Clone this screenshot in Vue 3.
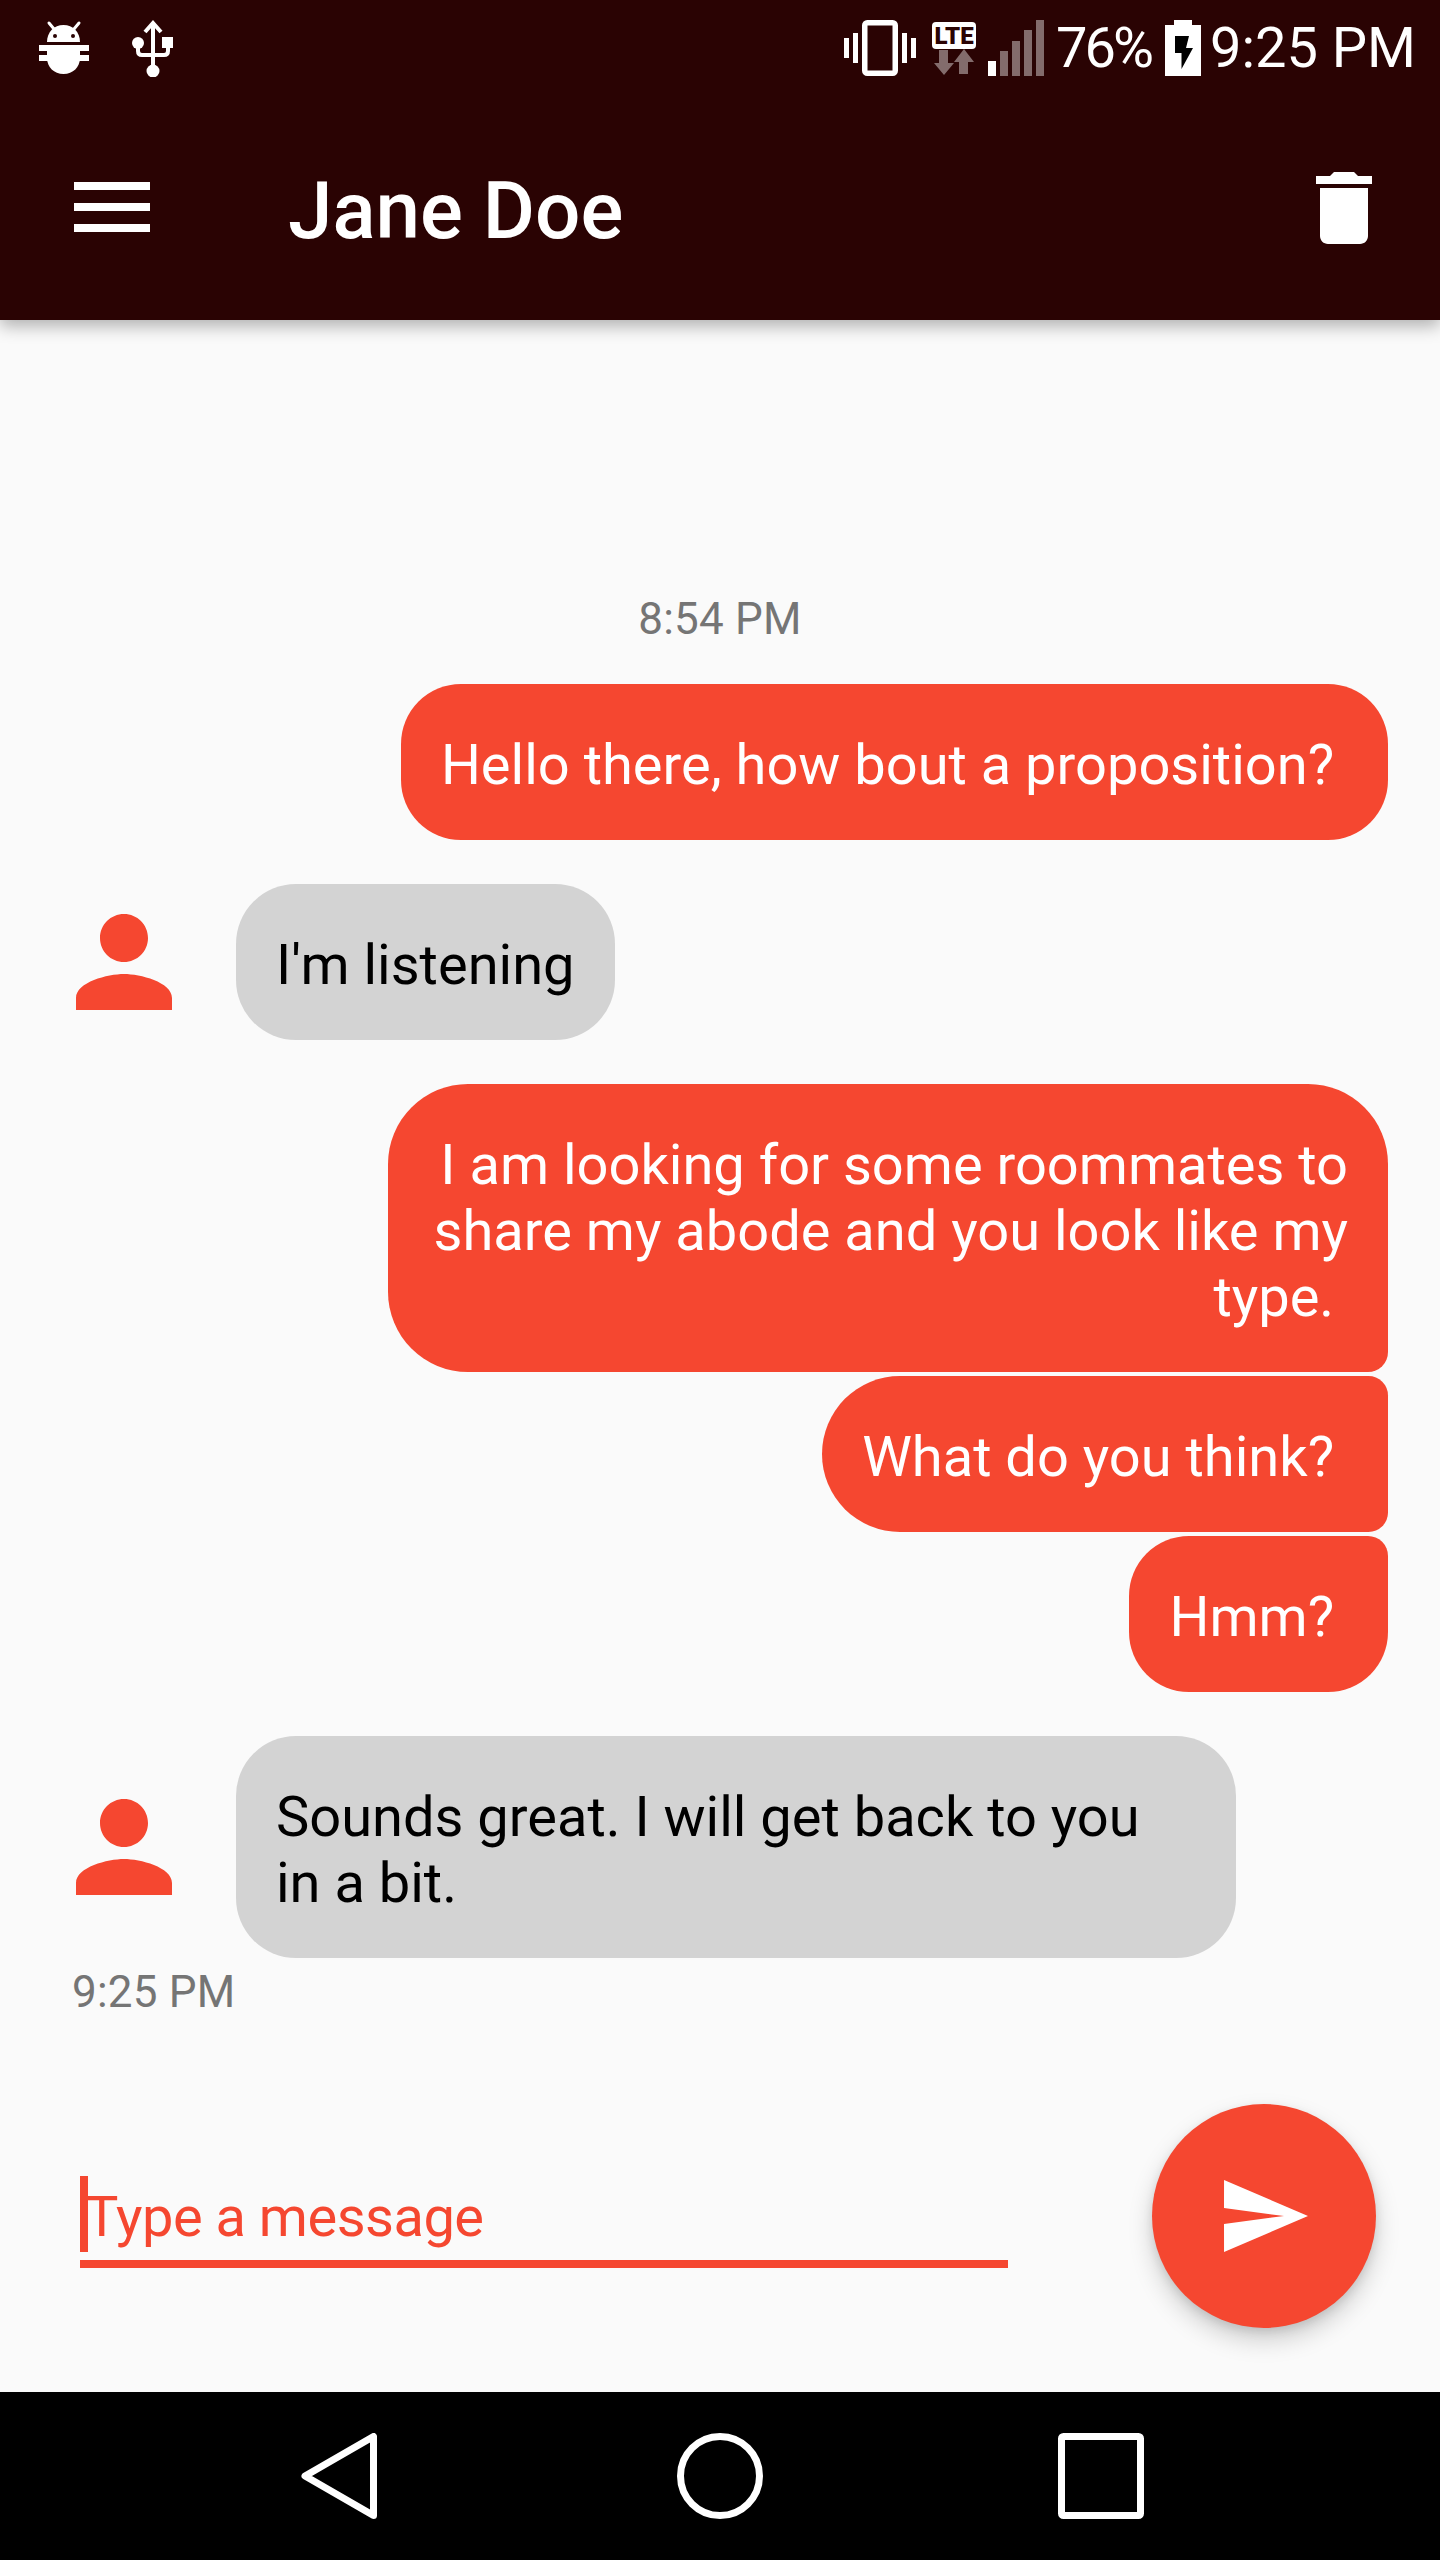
<template>
  <div class="phone">
    <header class="appbar">
      <div class="status">
        <div class="status-left">
          <svg class="ic-adb" width="50" height="56" viewBox="0 0 50 56">
            <path d="M10 3l5 6M40 3l-5 6" stroke="#fff" stroke-width="3" stroke-linecap="round" />
            <path d="M8 22c0-10 7-17 16.500-17S41 12 41 22z" fill="#fff" />
            <circle cx="16" cy="16" r="2" fill="#2a0303" />
            <circle cx="34" cy="16" r="2" fill="#2a0303" />
            <path d="M8 25h33v13c0 9-7 16-16.500 16S8 47 8 38z" fill="#fff" />
            <rect x="0" y="25" width="50" height="6" fill="#fff" />
            <rect x="0" y="35" width="50" height="6" fill="#fff" />
          </svg>
          <svg class="ic-usb" width="41" height="58" viewBox="0 0 41 58">
            <path d="M21 4v46M13 13l8-9 8 9" stroke="#fff" stroke-width="4" fill="none" />
            <path d="M6 26v6q0 4 4 4h22q4 0 4-4v-6" stroke="#fff" stroke-width="4" fill="none" />
            <circle cx="6" cy="24" r="6" fill="#fff" />
            <rect x="30" y="18" width="11" height="11" fill="#fff" />
            <circle cx="21" cy="52" r="6.500" fill="#fff" />
          </svg>
        </div>
        <div class="status-right">
          <svg class="ic-vibrate" width="72" height="56" viewBox="0 0 72 56">
            <rect x="20.750" y="2.750" width="30.500" height="50.500" rx="2.500" fill="none" stroke="#fff" stroke-width="5.500" />
            <path d="M9 13h5v30H9zM58 13h5v30h-5zM0 18h5v20H0zM67 18h5v20h-5z" fill="#fff" />
          </svg>
          <svg class="ic-lte" width="44" height="56" viewBox="0 0 44 56">
            <rect x="0" y="2" width="44" height="27" rx="4" fill="#fff" />
            <text x="22" y="24" text-anchor="middle" class="lte-label">LTE</text>
            <path class="dim" d="M7 30h9v13h6L12 55 2 43h5zM22 42l10-13 10 13h-6v12h-9V42z" />
          </svg>
          <svg class="ic-signal" width="56" height="56" viewBox="0 0 56 56">
            <rect x="0" y="41" width="8" height="15" fill="#fff" />
            <rect class="dim" x="12" y="31" width="8" height="25" />
            <rect class="dim" x="24" y="21" width="8" height="35" />
            <rect class="dim" x="36" y="10" width="8" height="46" />
            <rect class="dim" x="48" y="0" width="8" height="56" />
          </svg>
          <span class="battery-text">76%</span>
          <svg class="ic-battery" width="36" height="56" viewBox="0 0 36 56">
            <path d="M9 0h18v5h9v51H0V5h9z" fill="#fff" />
            <path d="M10 16h14l-3 12h7L16.500 49V33H10z" fill="#000" />
          </svg>
          <span class="clock">9:25 PM</span>
        </div>
      </div>
      <div class="toolbar">
        <svg class="ic-menu" width="96" height="96" viewBox="0 0 96 96">
          <path d="M10 22h76v8H10zM10 43h76v8H10zM10 64h76v8H10z" fill="#fff" />
        </svg>
        <h1 class="title">Jane Doe</h1>
        <svg class="ic-delete" width="96" height="96" viewBox="0 0 24 24">
          <path d="M6 19c0 1.100.9 2 2 2h8c1.100 0 2-.9 2-2V7H6v12zM19 4h-3.500l-1-1h-5l-1 1H5v2h14V4z" fill="#fff" />
        </svg>
      </div>
    </header>

    <main class="chat">
      <div class="time center">8:54 PM</div>
      <div
        v-for="msg in messages"
        :key="msg.id"
        class="row"
        :class="[msg.mine ? 'row-mine' : 'row-theirs', msg.pos]"
      >
        <svg v-if="!msg.mine" class="avatar" width="144" height="144" viewBox="0 0 24 24">
          <path d="M12 12c2.210 0 4-1.790 4-4s-1.790-4-4-4-4 1.790-4 4 1.790 4 4 4zm0 2c-2.670 0-8 1.340-8 4v2h16v-2c0-2.660-5.330-4-8-4z" />
        </svg>
        <div class="bubble">{{ msg.text }}</div>
      </div>
      <div class="time sent">9:25 PM</div>
    </main>

    <div class="composer">
      <div class="field">
        <span class="caret"></span>
        <span class="placeholder">Type a message</span>
      </div>
      <button class="send" type="button">
        <svg width="96" height="96" viewBox="0 0 24 24">
          <path d="M2.010 21L23 12 2.010 3 2 10l15 2-15 2z" fill="#fff" />
        </svg>
      </button>
    </div>

    <nav class="navbar">
      <svg width="76" height="86" viewBox="0 0 76 86">
        <path d="M72.500 3.500v79L4 43z" fill="none" stroke="#fff" stroke-width="7" stroke-linejoin="round" />
      </svg>
      <svg class="nav-home" width="86" height="86" viewBox="0 0 86 86">
        <circle cx="43" cy="43" r="39.500" fill="none" stroke="#fff" stroke-width="7" />
      </svg>
      <svg class="nav-recent" width="86" height="86" viewBox="0 0 86 86">
        <rect x="3.500" y="3.500" width="79" height="79" rx="2" fill="none" stroke="#fff" stroke-width="7" />
      </svg>
    </nav>
  </div>
</template>

<script setup>
const messages = [
  { id: 1, mine: true, pos: 'solo', text: 'Hello there, how bout a proposition?\u00a0' },
  { id: 2, mine: false, pos: 'solo', text: "I'm listening" },
  { id: 3, mine: true, pos: 'first', text: 'I am looking for some roommates to share my abode and you look like my type.\u00a0' },
  { id: 4, mine: true, pos: 'mid', text: 'What do you think?\u00a0' },
  { id: 5, mine: true, pos: 'last', text: 'Hmm?\u00a0' },
  { id: 6, mine: false, pos: 'solo', text: 'Sounds great. I will get back to you in a bit.' },
]
</script>

<style scoped>
.phone {
  width: 1440px;
  height: 2560px;
  display: flex;
  flex-direction: column;
  background: #fafafa;
  font-family: Roboto, "Liberation Sans", sans-serif;
  overflow: hidden;
}
.appbar {
  height: 320px;
  flex: none;
  background: #2a0303;
  color: #fff;
  box-shadow: 0 6px 16px rgba(0, 0, 0, 0.3);
  position: relative;
  z-index: 1;
}
.status {
  height: 96px;
  display: flex;
  align-items: center;
  justify-content: space-between;
  padding: 0 24px 0 39px;
}
.status-left,
.status-right {
  display: flex;
  align-items: center;
}
.ic-usb {
  margin-left: 43px;
}
.ic-lte {
  margin-left: 16px;
}
.ic-signal {
  margin-left: 12px;
}
.dim {
  fill: rgba(255, 255, 255, 0.42);
}
.lte-label {
  font-family: Roboto, "Liberation Sans", sans-serif;
  font-size: 24px;
  font-weight: 900;
  fill: #2a0303;
}
.battery-text,
.clock {
  font-size: 56px;
  line-height: 102px;
}
.battery-text {
  margin-left: 12px;
  letter-spacing: -3px;
}
.ic-battery {
  margin-left: 14px;
}
.clock {
  margin-left: 9px;
}
.toolbar {
  height: 224px;
  display: flex;
  align-items: center;
  padding: 0 48px 0 64px;
}
.title {
  margin: 0 0 0 128px;
  padding-top: 6px;
  font-size: 80px;
  font-weight: 500;
  line-height: 94px;
  flex: 1;
}
.chat {
  flex: 1;
  min-height: 0;
  padding-top: 273px;
}
.time {
  font-size: 44px;
  line-height: 47px;
  letter-spacing: 0.2px;
  color: #757575;
  padding-top: 3px;
  margin-bottom: -3px;
}
.time.center {
  text-align: center;
}
.time.sent {
  margin-top: 8px;
  padding-left: 72px;
}
.row {
  display: flex;
  align-items: center;
  margin-top: 44px;
}
.row.mid,
.row.last {
  margin-top: 4px;
}
.row-mine {
  justify-content: flex-end;
  padding-right: 52px;
}
.row-theirs {
  padding-left: 52px;
}
.avatar {
  fill: #f54730;
  margin-right: 40px;
  flex: none;
}
.bubble {
  max-width: 1000px;
  box-sizing: border-box;
  padding: 48px 40px 42px;
  border-radius: 60px;
  font-size: 56px;
  line-height: 66px;
}
.row-mine .bubble {
  background: #f54730;
  color: #fff;
  text-align: right;
}
.row-theirs .bubble {
  background: #d3d3d3;
  color: #000;
}
.first .bubble {
  border-radius: 80px 80px 20px 80px;
}
.mid .bubble {
  border-radius: 80px 20px 20px 80px;
}
.last .bubble {
  border-top-right-radius: 20px;
}
.composer {
  flex: none;
  height: 224px;
  display: flex;
  padding: 0 64px 64px 80px;
}
.field {
  width: 928px;
  height: 92px;
  box-sizing: border-box;
  margin-top: 72px;
  display: flex;
  border-bottom: 8px solid #f54730;
  color: #f54730;
}
.caret {
  width: 8px;
  height: 76px;
  background: #f54730;
  flex: none;
}
.placeholder {
  margin-left: -3px;
  font-size: 56px;
  line-height: 82px;
  letter-spacing: -0.5px;
}
.send {
  width: 224px;
  height: 224px;
  margin-left: auto;
  padding: 0;
  border: 0;
  border-radius: 50%;
  background: #f54730;
  display: flex;
  align-items: center;
  justify-content: center;
  box-shadow: 0 12px 24px rgba(0, 0, 0, 0.18), 0 4px 10px rgba(0, 0, 0, 0.1);
}
.navbar {
  flex: none;
  height: 168px;
  background: #000;
  display: flex;
  align-items: center;
  padding-left: 301px;
}
.nav-home {
  margin-left: 300px;
}
.nav-recent {
  margin-left: 295px;
}
</style>
